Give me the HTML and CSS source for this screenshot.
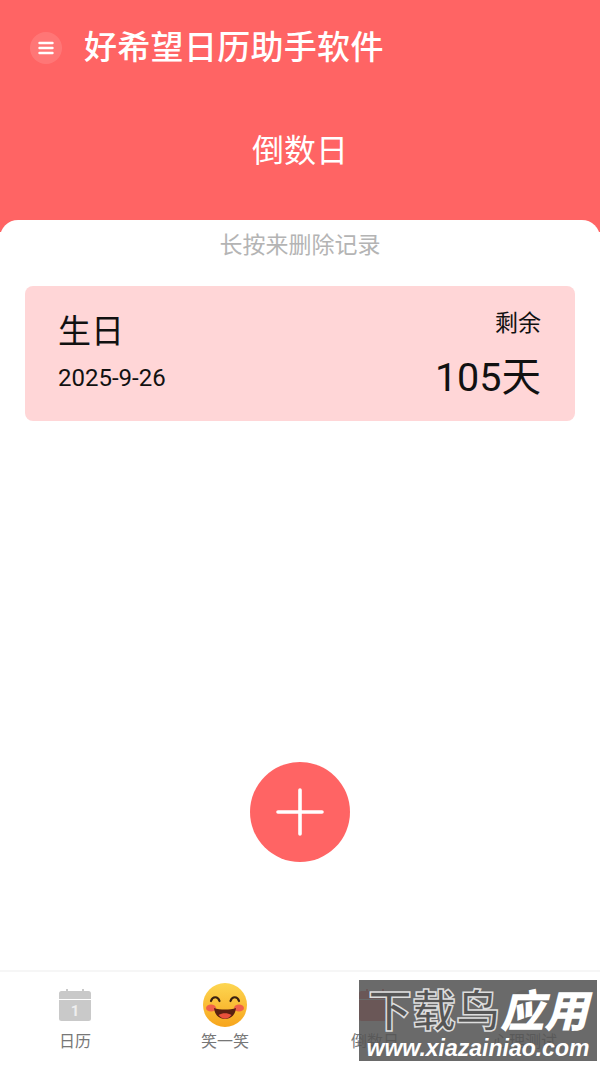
FILE: index.html
```html
<!DOCTYPE html>
<html lang="zh-CN">
<head>
<meta name="viewport" content="width=device-width, initial-scale=1">
<title>倒数日</title>
<link rel="stylesheet" href="styles.css">
</head>
<body>

<div class="app">
  <header class="top">
    <div class="title-row">
      <span class="menu-btn">
        <svg width="16" height="14" viewBox="0 0 16 14">
          <path d="M1.5 2H14.5M1.5 7H14.5M1.5 12H14.5" stroke="#fff" stroke-width="2.4" stroke-linecap="round"/>
        </svg>
      </span>
      <h1>好希望日历助手软件</h1>
    </div>
    <h2>倒数日</h2>
  </header>

  <main class="sheet">
    <p class="hint">长按来删除记录</p>

    <div class="record">
      <div class="record-left">
        <div class="record-name">生日</div>
        <div class="record-date">2025-9-26</div>
      </div>
      <div class="record-right">
        <div class="record-label">剩余</div>
        <div class="record-days">105天</div>
      </div>
    </div>

    <div class="add-wrap">
      <button class="add-btn" type="button">
        <svg width="48" height="48" viewBox="0 0 48 48">
          <path d="M24 2V46M2 24H46" stroke="#fff" stroke-width="3.6" stroke-linecap="round"/>
        </svg>
      </button>
    </div>
  </main>

  <nav class="tabs">
    <div class="tab">
      <div class="tab-icon">
        <svg width="32" height="32" viewBox="0 0 32 32">
          <path d="M7 0h2v3H7zM23 0h2v3h-2z" fill="#c9c9c9"/>
          <path d="M0 10V4.500A2.500 2.500 0 0 1 2.500 2h27A2.500 2.500 0 0 1 32 4.500V10z" fill="#c9c9c9"/>
          <path d="M0 11h32v18.500a2.500 2.500 0 0 1-2.500 2.500h-27A2.500 2.500 0 0 1 0 29.500z" fill="#c9c9c9"/>
          <text x="16" y="27" class="cal-num">1</text>
        </svg>
      </div>
      <span>日历</span>
    </div>
    <div class="tab">
      <div class="tab-icon">
        <svg width="46" height="46" viewBox="0 0 46 46">
          <defs>
            <linearGradient id="face" x1="0" y1="0" x2="0" y2="1">
              <stop offset="0" stop-color="#fdd651"/>
              <stop offset="1" stop-color="#f7a51c"/>
            </linearGradient>
          </defs>
          <circle cx="23" cy="23" r="22" fill="url(#face)"/>
          <ellipse cx="9" cy="26" rx="5" ry="3.600" fill="#f0604a"/>
          <ellipse cx="37" cy="26" rx="5" ry="3.600" fill="#f0604a"/>
          <path d="M9 19c1.500-5 7-5 8.500 0M28.500 19c1.500-5 7-5 8.500 0" fill="none" stroke="#3a2010" stroke-width="2.200" stroke-linecap="round"/>
          <path d="M12 26c6 2 16 2 22 0c-1 8-6 11-11 11s-10-3-11-11z" fill="#5a1f10"/>
          <path d="M16.500 33c4-2.500 9-2.500 13 0c-4 5-9 5-13 0z" fill="#e8503c"/>
        </svg>
      </div>
      <span>笑一笑</span>
    </div>
    <div class="tab">
      <div class="tab-icon">
        <svg width="32" height="32" viewBox="0 0 32 32">
          <path d="M7 0h2v3H7zM23 0h2v3h-2z" fill="#ff6363"/>
          <path d="M0 10V4.500A2.500 2.500 0 0 1 2.500 2h27A2.500 2.500 0 0 1 32 4.500V10z" fill="#ff6363"/>
          <path d="M0 11h32v18.500a2.500 2.500 0 0 1-2.500 2.500h-27A2.500 2.500 0 0 1 0 29.500z" fill="#ff6363"/>
        </svg>
      </div>
      <span>倒数日</span>
    </div>
    <div class="tab">
      <div class="tab-icon">
        <svg width="32" height="32" viewBox="0 0 32 32">
          <circle cx="16" cy="16" r="15" fill="#c9c9c9"/>
        </svg>
      </div>
      <span>心理测试</span>
    </div>
  </nav>

  <div class="watermark">
    <div class="wm-title">下载鸟<b>应用</b></div>
    <div class="wm-url">www.xiazainiao.com</div>
  </div>
</div>

</body>
</html>
```

FILE: styles.css
```css
* {
  box-sizing: border-box;
}

body {
  margin: 0;
  font-family: Roboto, "Noto Sans CJK SC", sans-serif;
  background-color: #fff;
  color: #111;
}

.app {
  position: relative;
  width: 600px;
  height: 1065px;
  display: flex;
  flex-direction: column;
  overflow: hidden;
}

.top {
  height: 232px;
  margin-bottom: -12px;
  background-color: #ff6464;
  color: #fff;
  padding-top: 27px;
}

.title-row {
  display: flex;
  align-items: center;
  padding-left: 30px;
}

.menu-btn {
  width: 32px;
  height: 32px;
  border-radius: 50%;
  background-color: rgba(255,255,255,0.12);
  display: flex;
  align-items: center;
  justify-content: center;
  margin-right: 22px;
}

h1 {
  margin: 0;
  font-size: 33px;
  line-height: 42px;
  font-weight: 500;
  letter-spacing: 0.3px;
}

h2 {
  margin: 60px 0 0;
  font-size: 32px;
  line-height: 44px;
  font-weight: 400;
  text-align: center;
}

.sheet {
  flex: 1;
  background-color: #fff;
  border-radius: 18px 18px 0 0;
  padding: 10px 25px 0;
  display: flex;
  flex-direction: column;
}

.hint {
  margin: 0;
  font-size: 23px;
  line-height: 32px;
  color: #b4b4b4;
  text-align: center;
}

.record {
  margin-top: 24px;
  height: 135px;
  background-color: #ffd6d7;
  border-radius: 8px;
  padding: 24px 34px 0 33px;
  display: flex;
  justify-content: space-between;
}

.record-name {
  font-size: 33px;
  line-height: 44px;
}

.record-date {
  margin-top: 9px;
  font-size: 24px;
  line-height: 30px;
}

.record-right {
  text-align: right;
}

.record-label {
  font-size: 23px;
  line-height: 28px;
}

.record-days {
  margin-top: 15px;
  font-size: 39.5px;
  line-height: 50px;
}

.add-wrap {
  margin-top: 341px;
  display: flex;
  justify-content: center;
}

.add-btn {
  width: 100px;
  height: 100px;
  border: none;
  border-radius: 50%;
  padding: 0;
  background-color: #ff6464;
  display: flex;
  align-items: center;
  justify-content: center;
}

.tabs {
  height: 95px;
  border-top: 2px solid #f6f6f6;
  display: grid;
  grid-template-columns: repeat(4, 1fr);
  background-color: #fff;
  padding-top: 10px;
}

.tab {
  display: flex;
  flex-direction: column;
  align-items: center;
  font-size: 16px;
  line-height: 22px;
  color: #777;
}

.tab-icon {
  height: 46px;
  margin-bottom: 3px;
  display: flex;
  align-items: center;
}

.cal-num {
  font-size: 15px;
  font-weight: 700;
  fill: #eee;
  text-anchor: middle;
}

/* site watermark sits over the tab bar */
.watermark {
  position: absolute;
  left: 359px;
  top: 980px;
  width: 238px;
  height: 81px;
  background-color: rgba(85,85,85,0.88);
  color: #fff;
  text-align: center;
  padding-top: 8px;
}

.wm-title {
  font-size: 44px;
  line-height: 48px;
  font-weight: 700;
  color: #555;
  -webkit-text-stroke: 1.5px #ddd;
  white-space: nowrap;
}

.wm-title b {
  color: #fff;
  -webkit-text-stroke: 0;
  font-style: italic;
  font-weight: 900;
}

.wm-url {
  font-family: "Liberation Sans", sans-serif;
  font-size: 23px;
  line-height: 24px;
  font-weight: 700;
  font-style: italic;
  white-space: nowrap;
}
```
